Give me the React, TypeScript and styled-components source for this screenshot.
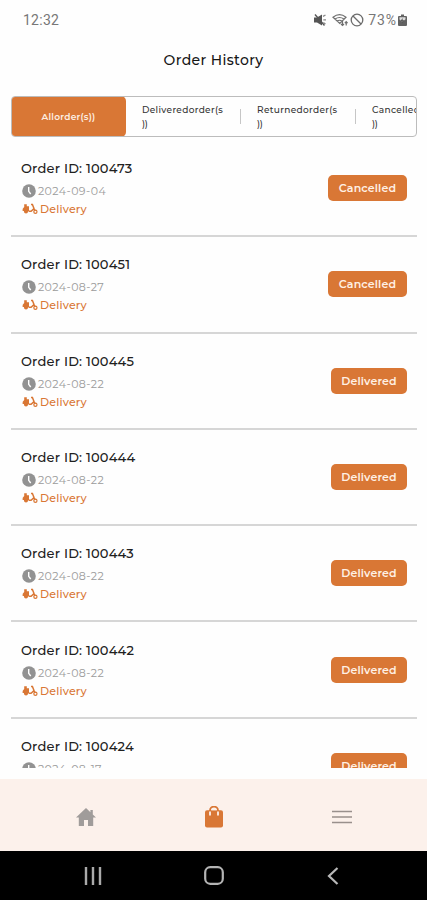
import React from 'react';
import styled, { createGlobalStyle } from 'styled-components';

const ACCENT = '#d97735';

const GlobalStyle = createGlobalStyle`
  * { box-sizing: border-box; }
  body { margin: 0; background: #fefefe; font-family: Montserrat, Inter, sans-serif; }
`;

const Screen = styled.div`
  width: 427px;
  height: 900px;
  display: flex;
  flex-direction: column;
  overflow: hidden;
  background: #fefefe;
`;

const StatusBar = styled.header`
  height: 40px;
  flex: none;
  display: flex;
  align-items: center;
  justify-content: space-between;
  padding: 0 20px 0 23px;
  color: #777;
  font: 400 14px Roboto, sans-serif;
`;

const Clock = styled.span`
  letter-spacing: 0.25px;
`;

const StatusIcons = styled.div`
  display: flex;
  align-items: center;
`;

const WifiSlot = styled.span`
  display: flex;
  margin: 0 1px 0 5px;
`;

const Battery = styled.span`
  margin: 0 1px 0 4px;
  letter-spacing: 0.9px;
`;

const Title = styled.h1`
  height: 40px;
  flex: none;
  margin: 0;
  text-align: center;
  line-height: 40px;
  font-size: 14px;
  font-weight: 500;
  letter-spacing: 0.35px;
  color: #161616;
`;

const Tabs = styled.div`
  flex: none;
  display: flex;
  width: 406px;
  height: 41px;
  margin: 16px 0 4px 11px;
  border: 1px solid #bcbcbc;
  border-radius: 4px;
  overflow: hidden;
`;

const ActiveTab = styled.button`
  flex: none;
  width: 115px;
  height: 41px;
  margin: -1px 0 0 -1px;
  padding: 0;
  border: 0;
  border-radius: 5px;
  background: ${ACCENT};
  color: #fdeee2;
  font: 600 9px Montserrat, Inter, sans-serif;
  letter-spacing: 0.25px;
`;

const Tab = styled.button`
  flex: none;
  display: flex;
  align-items: center;
  width: 115px;
  padding: 0 0 0 16px;
  border: 0;
  background: none;
  color: #333;
  text-align: left;
  font: 500 9px/14px Montserrat, Inter, sans-serif;
  letter-spacing: 0.34px;
`;

const TabLabel = styled.span`
  flex: 1;
  white-space: nowrap;
`;

const Closing = styled.span`
  letter-spacing: -0.3px;
`;

const Divider = styled.i`
  width: 1px;
  height: 15px;
  background: #c6c6c6;
`;

const Orders = styled.main`
  flex: none;
  height: 627px;
  padding: 0 10px 0 11px;
  overflow: hidden;
`;

const OrderRow = styled.article`
  display: flex;
  align-items: center;
  justify-content: space-between;
  height: 96.3px;
  padding: 0 10px;
  border-bottom: 2px solid #d6d6d6;
`;

const Details = styled.div`
  display: flex;
  flex-direction: column;
`;

const OrderId = styled.h2`
  margin: 0 0 4px;
  font-size: 13px;
  line-height: 20px;
  font-weight: 500;
  letter-spacing: 0.2px;
  color: #202020;
`;

const Meta = styled.div<{ $accent?: boolean }>`
  display: flex;
  align-items: center;
  height: 18px;
  gap: 2px;
  padding-left: 1px;
  color: ${p => (p.$accent ? ACCENT : '#9b9b9b')};
  font-size: 11px;
  font-weight: ${p => (p.$accent ? 500 : 400)};
  letter-spacing: ${p => (p.$accent ? 0.2 : 0.4)}px;
`;

const Badge = styled.span<{ $wide: boolean }>`
  flex: none;
  width: ${p => (p.$wide ? 79 : 76)}px;
  height: 26px;
  border-radius: 5px;
  background: ${ACCENT};
  color: #fff0e4;
  text-align: center;
  font-size: 11px;
  line-height: 26px;
  font-weight: 600;
  letter-spacing: 0.15px;
`;

const BottomNav = styled.nav`
  height: 72px;
  margin-top: 11px;
  flex: none;
  display: flex;
  align-items: center;
  justify-content: space-around;
  padding: 4px 21px 0 22px;
  background: #fcf1eb;
`;

const SystemNav = styled.footer`
  flex: 1;
  display: flex;
  align-items: center;
  justify-content: space-around;
  padding: 0 37px 0 33px;
  background: #000;
`;

const ClockIcon = () => (
  <svg width="14" height="14" viewBox="0 0 14 14">
    <circle cx="7" cy="7" r="6.8" fill="#929292" />
    <path d="M6.7 3v4.3l2 2.7" fill="none" stroke="#fff" strokeWidth="1.4" />
  </svg>
);

const ScooterIcon = () => (
  <svg width="16" height="12" viewBox="0 0 16 12" fill={ACCENT}>
    <path d="M2.2 1.2h2.6v2H7V8H6a2.2 2.2 0 0 1-4.2 0H.6Q0 5.5 2.2 4z" />
    <circle cx="4" cy="8.6" r="2" />
    <path d="M6.5 8.2h2.6L12 5.6 10.4 1.4H9M11.8 5.4l1.4 2.6" fill="none" stroke={ACCENT} strokeWidth="1.5" />
    <circle cx="13.4" cy="8.8" r="1.6" fill="none" stroke={ACCENT} strokeWidth="1.2" />
  </svg>
);

const MuteIcon = () => (
  <svg width="13" height="14" viewBox="0 0 13 14">
    <path d="M0 4.6h3L8 1.5v11L3 9.4H0z" fill="#555" />
    <path d="m1 1.5 9.5 11" stroke="#555" strokeWidth="1.4" />
    <path d="M9 3.4 11.5 2M9.3 6.8H12M9.3 9.6l2.2 1.4" stroke="#888" strokeWidth="1.3" />
  </svg>
);

const WifiIcon = () => (
  <svg width="17" height="14" viewBox="0 0 17 14" fill="none" stroke="#6f6f6f">
    <path d="M1 4.2q6.5-5 13 0L7.8 10.5zM3 6q4.5-3 9 0M5 8q2.5-1.5 5 0" strokeWidth="1.2" />
    <path d="M10.5 8v4.5M9 11l1.5 1.5L12 11M14.2 12.5V8.7m-1.4 1.4 1.4-1.4 1.4 1.4" strokeWidth="1.2" />
  </svg>
);

const BlockIcon = () => (
  <svg width="14" height="14" viewBox="0 0 14 14" fill="none" stroke="#6c6c6c" strokeWidth="1.3">
    <circle cx="7" cy="7" r="5.8" />
    <path d="m3 3 8 8" />
  </svg>
);

const BatteryIcon = () => (
  <svg width="9" height="14" viewBox="0 0 9 14">
    <path d="M3 1.5h3V3h2q1 0 1 1v8q0 1-1 1H1q-1 0-1-1V4q0-1 1-1h2z" fill="#626262" />
    <path d="M1.5 4.2h6v2L4.5 9l-3-2.5z" fill="#ddd" />
    <path d="m4.5 5-2 3.2h1.8v2.3l2.2-3.3H4.7z" fill="#555" />
  </svg>
);

const HomeIcon = () => (
  <svg width="20" height="18" viewBox="0 0 20 18">
    <path d="M10 0 0 9.6h2.8V18H8v-6h4v6h5.2V9.6H20L16.8 6.5V2h-2.4v2.2z" fill="#a09c9a" />
  </svg>
);

const BagIcon = () => (
  <svg width="20" height="22" viewBox="0 0 20 22">
    <path d="M6 6V4.5a4 4 0 0 1 8 0V6" fill="none" stroke={ACCENT} strokeWidth="1.8" />
    <rect x="1" y="4.2" width="18" height="17.3" rx="2" fill={ACCENT} />
    <path d="M7.3 4.3a2.8 2.3 0 0 1 5.4 0z" fill="#fcf1eb" />
    <path d="M6 6.2v2.6M14 6.2v2.6" stroke="#fcf1eb" strokeWidth="1.8" strokeLinecap="round" />
  </svg>
);

const MenuIcon = () => (
  <svg width="20" height="14" viewBox="0 0 20 14">
    <path d="M0 1.5h20M0 7h20M0 12.5h20" stroke="#99908c" strokeWidth="1.6" />
  </svg>
);

const RecentsIcon = () => (
  <svg width="18" height="18" viewBox="0 0 18 18">
    <path d="M2 0v18M9 0v18M16 0v18" stroke="#aaa" strokeWidth="2.4" />
  </svg>
);

const HomeKeyIcon = () => (
  <svg width="20" height="19" viewBox="0 0 20 19">
    <rect x="1.2" y="1.2" width="17.6" height="16.6" rx="5" fill="none" stroke="#b4b4b4" strokeWidth="2.2" />
  </svg>
);

const BackIcon = () => (
  <svg width="12" height="18" viewBox="0 0 12 18">
    <path d="M10.5 1 2 9l8.5 8" fill="none" stroke="#b8b8b8" strokeWidth="2.2" />
  </svg>
);

const tabs = ['Deliveredorder(s', 'Returnedorder(s', 'Cancelledorder(s'];

const orders = [
  { id: '100473', date: '2024-09-04', status: 'Cancelled' },
  { id: '100451', date: '2024-08-27', status: 'Cancelled' },
  { id: '100445', date: '2024-08-22', status: 'Delivered' },
  { id: '100444', date: '2024-08-22', status: 'Delivered' },
  { id: '100443', date: '2024-08-22', status: 'Delivered' },
  { id: '100442', date: '2024-08-22', status: 'Delivered' },
  { id: '100424', date: '2024-08-17', status: 'Delivered' },
];

export default function App() {
  return (
    <>
      <GlobalStyle />
      <Screen>
        <StatusBar>
          <Clock>12:32</Clock>
          <StatusIcons>
            <MuteIcon />
            <WifiSlot><WifiIcon /></WifiSlot>
            <BlockIcon />
            <Battery>73%</Battery>
            <BatteryIcon />
          </StatusIcons>
        </StatusBar>
        <Title>Order History</Title>
        <Tabs>
          <ActiveTab>Allorder(s))</ActiveTab>
          {tabs.map((label, i) => (
            <Tab key={label}>
              <TabLabel>{label}<br /><Closing>))</Closing></TabLabel>
              {i < 2 && <Divider />}
            </Tab>
          ))}
        </Tabs>
        <Orders>
          {orders.map(o => (
            <OrderRow key={o.id}>
              <Details>
                <OrderId>Order ID: {o.id}</OrderId>
                <Meta><ClockIcon />{o.date}</Meta>
                <Meta $accent><ScooterIcon />Delivery</Meta>
              </Details>
              <Badge $wide={o.status === 'Cancelled'}>{o.status}</Badge>
            </OrderRow>
          ))}
        </Orders>
        <BottomNav>
          <HomeIcon />
          <BagIcon />
          <MenuIcon />
        </BottomNav>
        <SystemNav>
          <RecentsIcon />
          <HomeKeyIcon />
          <BackIcon />
        </SystemNav>
      </Screen>
    </>
  );
}
